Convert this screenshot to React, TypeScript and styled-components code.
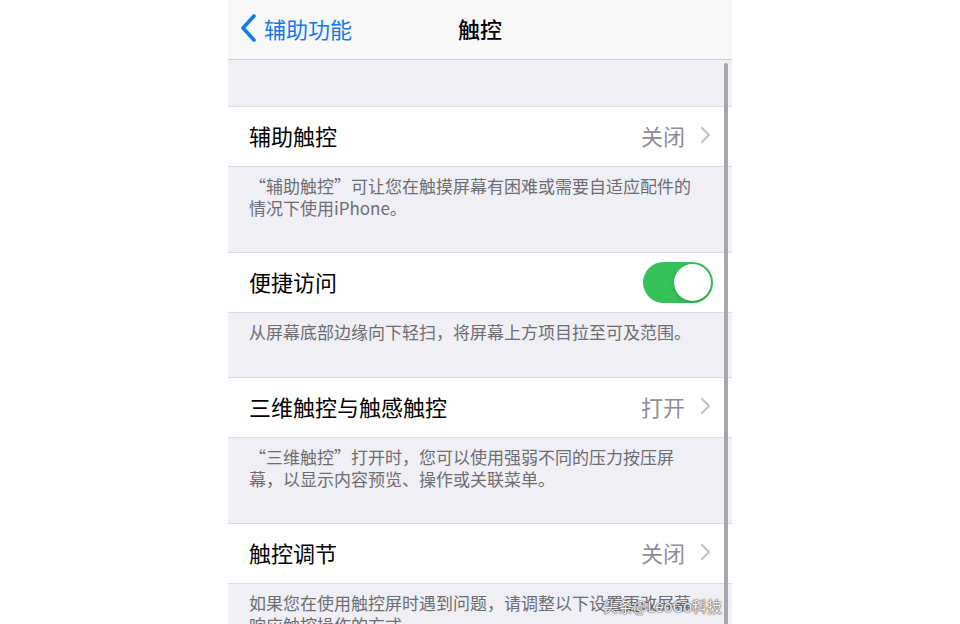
import React from 'react';
import styled, {createGlobalStyle} from 'styled-components';

const GlobalStyle = createGlobalStyle`
html, body {
    margin: 0;
    padding: 0;
    background: #ffffff;
}
body {
    font-family: "Noto Sans CJK SC", "Noto Sans", sans-serif;
}
`;

const Screen = styled.div`
position: relative;
width: 504px;
height: 624px;
margin: 0 auto;
overflow: hidden;
background: #efeff4;
`;

const NavBar = styled.div`
box-sizing: border-box;
display: grid;
grid-template-columns: 1fr auto 1fr;
align-items: center;
height: 60px;
padding-bottom: 4px;
background: #f8f8f8;
border-bottom: 1px solid #cfcfd3;
`;

const BackButton = styled.div`
display: flex;
align-items: center;
gap: 6px;
padding-left: 12px;
color: #107bec;
font-size: 22px;
`;

const NavTitle = styled.div`
font-size: 22px;
font-weight: 500;
color: #000000;
`;

const TopGap = styled.div`
height: 46px;
`;

const Row = styled.div`
box-sizing: border-box;
display: flex;
align-items: center;
height: 61px;
padding: 0 21px 3px 21px;
background: #ffffff;
border-top: 1px solid #dcdce0;
border-bottom: 1px solid #dcdce0;
`;

const RowTitle = styled.div`
flex: 1;
font-size: 22px;
color: #000000;
`;

const RowValue = styled.div`
display: flex;
align-items: center;
gap: 15px;
font-size: 22px;
color: #8e8e93;
`;

const Footer = styled.div<{$lines: number}>`
box-sizing: border-box;
height: ${p => (p.$lines === 1 ? 64 : 85)}px;
padding: 8px 28px 0 21px;
font-size: 17px;
line-height: 22px;
color: #6d6d72;
`;

const Toggle = styled.div<{$on: boolean}>`
position: relative;
width: 70px;
height: 41px;
margin: 3px -2px 0 0;
border-radius: 21px;
background: ${p => (p.$on ? '#36c25a' : '#e5e5ea')};
`;

const Knob = styled.div<{$on: boolean}>`
position: absolute;
top: 2px;
left: ${p => (p.$on ? '31px' : '2px')};
width: 37px;
height: 37px;
border-radius: 50%;
background: #ffffff;
box-shadow: 0 2px 4px rgba(0, 0, 0, 0.18);
`;

const ScrollIndicator = styled.div`
position: absolute;
top: 63px;
right: 4px;
width: 4px;
height: 580px;
border-radius: 2px;
background: #a8a8ac;
`;

const Watermark = styled.div`
position: absolute;
right: 10px;
bottom: 8px;
font-size: 15px;
color: #f4f4f4;
text-shadow: 0 0 2px #444, 0 0 1px #222;
`;

function BackChevron() {
    return (
        <svg width='18' height='28' viewBox='0 0 18 28'>
            <path
                d='M14 2 L3 14 L14 26'
                fill='none'
                stroke='#107bec'
                strokeWidth='3.6'
                strokeLinecap='round'
                strokeLinejoin='round'
            />
        </svg>
    );
}

function Disclosure() {
    return (
        <svg width='11' height='18' viewBox='0 0 11 18'>
            <path
                d='M2 2 L9 9 L2 16'
                fill='none'
                stroke='#c4c4c8'
                strokeWidth='2.2'
                strokeLinecap='round'
                strokeLinejoin='round'
            />
        </svg>
    );
}

type Item = {
    title: string;
    value?: string;
    toggle?: boolean;
    footer: string;
    lines: number;
};

const items: Item[] = [
    {
        title: '辅助触控',
        value: '关闭',
        footer: '“辅助触控”可让您在触摸屏幕有困难或需要自适应配件的情况下使用iPhone。',
        lines: 2,
    },
    {
        title: '便捷访问',
        toggle: true,
        footer: '从屏幕底部边缘向下轻扫，将屏幕上方项目拉至可及范围。',
        lines: 1,
    },
    {
        title: '三维触控与触感触控',
        value: '打开',
        footer: '“三维触控”打开时，您可以使用强弱不同的压力按压屏幕，以显示内容预览、操作或关联菜单。',
        lines: 2,
    },
    {
        title: '触控调节',
        value: '关闭',
        footer: '如果您在使用触控屏时遇到问题，请调整以下设置更改屏幕响应触控操作的方式。',
        lines: 2,
    },
];

export default function App() {
    return (
        <Screen>
            <GlobalStyle/>
            <NavBar>
                <BackButton>
                    <BackChevron/>
                    {'辅助功能'}
                </BackButton>
                <NavTitle>{'触控'}</NavTitle>
                <div/>
            </NavBar>
            <TopGap/>
            {items.map((item) => (
                <React.Fragment key={item.title}>
                    <Row>
                        <RowTitle>{item.title}</RowTitle>
                        {item.toggle ? (
                            <Toggle $on={true}>
                                <Knob $on={true}/>
                            </Toggle>
                        ) : (
                            <RowValue>
                                {item.value}
                                <Disclosure/>
                            </RowValue>
                        )}
                    </Row>
                    <Footer $lines={item.lines}>{item.footer}</Footer>
                </React.Fragment>
            ))}
            <ScrollIndicator/>
            <Watermark>{'头条@LeoGo科技'}</Watermark>
        </Screen>
    );
}
